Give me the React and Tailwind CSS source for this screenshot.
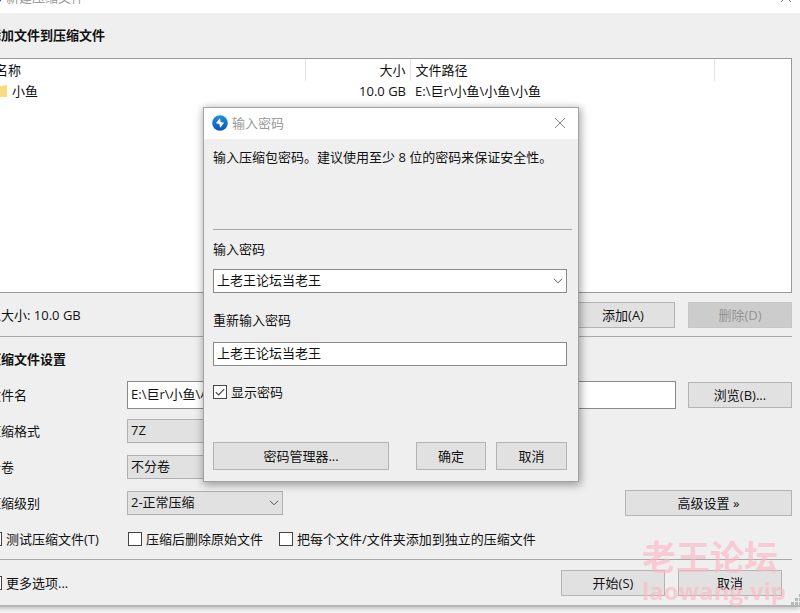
import { useState } from "react";
import clsx from "clsx";

const files = [{ name: "小鱼", size: "10.0 GB", path: "E:\\巨r\\小鱼\\小鱼\\小鱼" }];

const Button = ({ className, children, ...props }) => (
  <button
    type="button"
    className={clsx(
      "border border-[#b4b4b4] bg-[#e1e1e1] text-center hover:border-[#0078d7] hover:bg-[#e5f1fb] disabled:border-[#c6c6c6] disabled:bg-[#cccccc] disabled:text-[#949494]",
      className
    )}
    {...props}
  >
    {children}
  </button>
);

const Chevron = () => (
  <svg
    viewBox="0 0 10 6"
    className="pointer-events-none absolute top-1/2 right-1 h-1.5 w-2.5 -translate-y-1/2"
    fill="none"
    stroke="#555"
    strokeWidth="1"
  >
    <path d="M1 0.8 5 4.8 9 0.8" />
  </svg>
);

const Select = ({ id, options, white }) => (
  <div className="relative">
    <select
      id={id}
      className={clsx(
        "block h-6 w-full appearance-none border pr-6 pb-0.5 pl-[3px] outline-none",
        white ? "border-[#8a8a8a] bg-white" : "border-[#b0b0b0] bg-[#e1e1e1]"
      )}
    >
      {options.map((option) => (
        <option key={option}>{option}</option>
      ))}
    </select>
    <Chevron />
  </div>
);

const Checkbox = ({ label, ...props }) => (
  <label className="flex items-center gap-1 whitespace-nowrap">
    <span className="relative h-3.5 w-3.5 shrink-0">
      <input
        type="checkbox"
        className="peer block h-3.5 w-3.5 appearance-none border border-[#444] bg-white"
        {...props}
      />
      <svg
        viewBox="0 0 14 14"
        className="pointer-events-none absolute inset-0 hidden peer-checked:block"
        fill="none"
        stroke="#444"
        strokeWidth="1.2"
      >
        <path d="M2.8 7.2 5.6 10 11.2 4.2" />
      </svg>
    </span>
    {label}
  </label>
);

const AppIcon = ({ className }) => (
  <svg viewBox="0 0 16 16" className={className}>
    <defs>
      <linearGradient id="disc" x1="0" y1="0" x2="0" y2="1">
        <stop offset="0" stopColor="#1e93dc" />
        <stop offset="1" stopColor="#0b55b5" />
      </linearGradient>
    </defs>
    <circle cx="8" cy="8" r="7.8" fill="url(#disc)" />
    <path d="M7.9 3.2 3.9 8.3 7.3 9 8.2 12.8 12.1 7.7 8.7 7Z" fill="#fff" />
  </svg>
);

const CloseButton = () => (
  <button type="button" aria-label="关闭" className="p-1">
    <svg viewBox="0 0 12 12" className="h-3 w-3" stroke="#8a8a8a" strokeWidth="1">
      <path d="M1 1 11 11M11 1 1 11" />
    </svg>
  </button>
);

const FolderIcon = () => (
  <svg viewBox="0 0 16 16" className="h-4 w-4 shrink-0">
    <path d="M1 2h6l1 1.5h8V14H1Z" fill="#e8b94a" />
    <path d="M1 4.5 16 2v12H1Z" fill="#fbdc7c" />
  </svg>
);

const Row = ({ label, htmlFor, children }) => (
  <div className="flex h-7 items-center">
    <label htmlFor={htmlFor} className="w-[139px] shrink-0">
      {label}
    </label>
    {children}
  </div>
);

const FileTable = () => (
  <div className="h-[235px] border border-[#999] bg-white">
    <table className="w-full table-fixed">
      <thead>
        <tr className="h-[22px] text-left">
          <th className="border-r border-[#e3e3e3] pl-1.5 font-normal">名称</th>
          <th className="w-[105px] border-r border-[#e3e3e3] pr-1 text-right font-normal">
            大小
          </th>
          <th className="w-[304px] border-r border-[#e3e3e3] pl-[5px] font-normal">
            文件路径
          </th>
          <td className="w-[77px]"></td>
        </tr>
      </thead>
      <tbody>
        {files.map((file) => (
          <tr key={file.path} className="h-5">
            <td>
              <span className="flex items-center gap-[5px] pl-0.5">
                <FolderIcon />
                {file.name}
              </span>
            </td>
            <td className="pr-1 text-right">{file.size}</td>
            <td className="pl-[5px]">{file.path}</td>
            <td></td>
          </tr>
        ))}
      </tbody>
    </table>
  </div>
);

const PasswordDialog = () => {
  const [show, setShow] = useState(true);
  const [confirm, setConfirm] = useState("上老王论坛当老王");

  return (
    <div
      role="dialog"
      aria-labelledby="dialog-title"
      className="absolute top-[107px] left-[203px] w-[376px] border border-[#a3a3a3] bg-[#efefef] shadow-[1px_2px_8px_1px_rgba(0,0,0,0.35)]"
    >
      <div className="flex h-[31px] items-center bg-white pr-2 pb-0.5 pl-2">
        <AppIcon className="h-4 w-4" />
        <h2 id="dialog-title" className="ml-1 flex-1 text-[#999]">
          输入密码
        </h2>
        <CloseButton />
      </div>
      <div className="pt-2 pr-1.5 pb-[11px] pl-[9px]">
        <p className="h-20 whitespace-nowrap">
          输入压缩包密码。建议使用至少 8 位的密码来保证安全性。
        </p>
        <hr className="mt-[2px] border-[#a8a8a8]" />
        <div className="pr-[5px]">
          <label htmlFor="password" className="mt-[9px] mb-2.5 block">
            输入密码
          </label>
          <Select id="password" white options={["上老王论坛当老王"]} />
          <label htmlFor="confirm" className="mt-[17px] mb-3 block">
            重新输入密码
          </label>
          <input
            id="confirm"
            type={show ? "text" : "password"}
            value={confirm}
            onChange={(e) => setConfirm(e.target.value)}
            className="block h-6 w-full border border-[#8a8a8a] bg-white px-[3px] pb-1 outline-none"
          />
          <div className="mt-4">
            <Checkbox
              label="显示密码"
              checked={show}
              onChange={(e) => setShow(e.target.checked)}
            />
          </div>
          <div className="mt-10 flex">
            <Button className="h-7 w-[176px]">密码管理器...</Button>
            <Button className="ml-auto h-7 w-[70px]">确定</Button>
            <Button className="ml-2.5 h-7 w-[71px]">取消</Button>
          </div>
        </div>
      </div>
    </div>
  );
};

const ArchiveWindow = () => (
  <div className="-mt-[18px] -ml-6 border-b-2 border-[#b5b5b5] bg-[#efefef] shadow-[0_1px_6px_rgba(0,0,0,0.3)]">
    <div className="flex h-[31px] items-center bg-white pr-1 pb-0.5 pl-2.5">
      <AppIcon className="h-4 w-4" />
      <h1 className="ml-1 flex-1 text-[#999]">新建压缩文件</h1>
      <CloseButton />
    </div>
    <div className="pr-2 pl-3">
      <h2 className="flex h-[45px] items-center pb-0.5 font-bold">
        添加文件到压缩文件
      </h2>
      <FileTable />
      <div className="mt-[9px] flex items-center gap-[13px]">
        <span className="flex-1">总大小: 10.0 GB</span>
        <Button className="h-[26px] w-[104px]">添加(A)</Button>
        <Button className="h-[26px] w-[104px]" disabled>
          删除(D)
        </Button>
      </div>
      <hr className="mt-2 border-[#a8a8a8]" />
      <h2 className="flex h-11 items-center font-bold">压缩文件设置</h2>
      <div className="flex flex-col gap-2">
        <Row label="文件名" htmlFor="filename">
          <input
            id="filename"
            defaultValue={files[0].path}
            className="h-7 min-w-0 flex-1 border border-[#8a8a8a] bg-white px-[3px] pb-1 outline-none"
          />
          <Button className="ml-3 h-[26px] w-[104px]">浏览(B)...</Button>
        </Row>
        <Row label="压缩格式" htmlFor="format">
          <div className="w-[156px]">
            <Select id="format" options={["7Z"]} />
          </div>
        </Row>
        <Row label="分卷" htmlFor="volume">
          <div className="w-[156px]">
            <Select id="volume" options={["不分卷"]} />
          </div>
        </Row>
        <Row label="压缩级别" htmlFor="level">
          <div className="w-[156px]">
            <Select id="level" options={["2-正常压缩"]} />
          </div>
          <Button className="ml-auto h-[26px] w-[167px]">高级设置 »</Button>
        </Row>
        <div className="grid h-7 grid-cols-[140px_151px_1fr] items-center">
          <Checkbox label="测试压缩文件(T)" />
          <Checkbox label="压缩后删除原始文件" />
          <Checkbox label="把每个文件/文件夹添加到独立的压缩文件" />
        </div>
      </div>
      <hr className="mt-1.5 border-[#a8a8a8]" />
      <div className="flex items-center gap-[13px] pt-2.5 pr-2.5 pb-[9px]">
        <div className="flex-1">
          <Checkbox label="更多选项..." defaultChecked />
        </div>
        <Button className="h-[26px] w-[104px]">开始(S)</Button>
        <Button className="h-[26px] w-[104px]">取消</Button>
      </div>
    </div>
  </div>
);

const SizeGrip = () => (
  <svg
    viewBox="0 0 11 11"
    className="absolute top-[594px] -right-0.5 h-[11px] w-[11px]"
    fill="#b8b8b8"
  >
    <path d="M8 0h3v3H8zM4 4h3v3H4zM8 4h3v3H8zM0 8h3v3H0zM4 8h3v3H4zM8 8h3v3H8z" />
  </svg>
);

const Watermark = () => (
  <div className="pointer-events-none absolute top-[537px] left-[642px] font-bold whitespace-nowrap text-[#ffb4c3]/60">
    <p className="text-[34px] leading-10">老王论坛</p>
    <p className="text-[24px] leading-7">laowang.vip</p>
  </div>
);

const App = () => (
  <div className="relative min-h-screen overflow-hidden bg-[#fafafa] font-['Open_Sans','Noto_Sans_CJK_SC',sans-serif] text-[13px] leading-5 text-[#111]">
    <ArchiveWindow />
    <SizeGrip />
    <PasswordDialog />
    <Watermark />
  </div>
);

export default App;
